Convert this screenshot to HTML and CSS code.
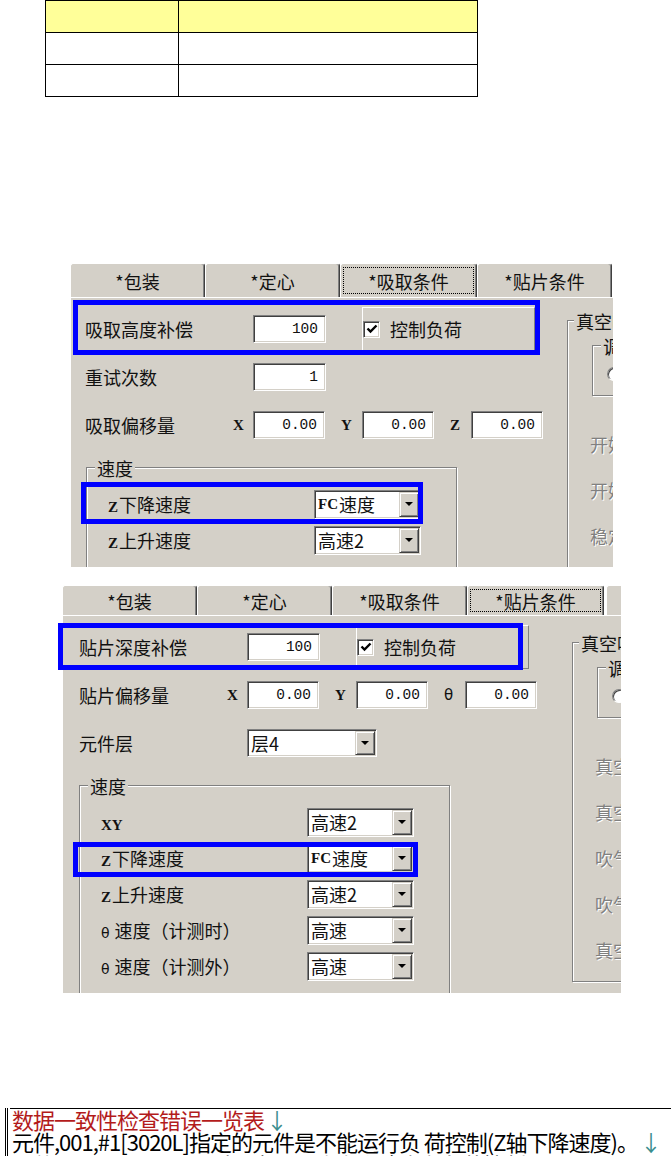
FILE: index.html
```html
<!DOCTYPE html>
<html lang="zh-CN">
<head>
    <meta charset="UTF-8">
    <meta name="viewport" content="width=device-width, initial-scale=1.0">
    <title>吸取条件 / 贴片条件 负荷控制</title>
    <link rel="stylesheet" href="styles.css">
</head>
<body>
    <table class="spec">
        <tr class="spec-head"><td class="c1"></td><td class="c2"></td></tr>
        <tr><td class="c1"></td><td class="c2"></td></tr>
        <tr><td class="c1"></td><td class="c2"></td></tr>
    </table>

    <!-- 吸取条件 -->
    <div class="dlg dlg-pick">
        <div class="tabs">
            <div class="tab">*包装</div>
            <div class="tab">*定心</div>
            <div class="tab active"><span class="focus">*吸取条件</span></div>
            <div class="tab">*贴片条件</div>
        </div>
        <div class="panel">
            <div class="main">
                <div class="row">
                    <span class="lbl">吸取高度补偿</span>
                    <span class="edit">100</span>
                    <span class="chk-wrap">
                        <span class="chk"><svg width="12" height="12" viewBox="0 0 12 12"><polyline points="1.5,5.5 4.5,8.5 10.5,2.5" fill="none" stroke="#000" stroke-width="2.4"/></svg></span>
                        <span>控制负荷</span>
                    </span>
                </div>
                <div class="row">
                    <span class="lbl">重试次数</span>
                    <span class="edit">1</span>
                </div>
                <div class="row">
                    <span class="lbl lbl-s">吸取偏移量</span>
                    <span class="ax ax-first">X</span>
                    <span class="edit edit-sm">0.00</span>
                    <span class="ax">Y</span>
                    <span class="edit edit-sm">0.00</span>
                    <span class="ax">Z</span>
                    <span class="edit edit-sm">0.00</span>
                </div>
                <div class="grp speed">
                    <span class="grp-title">速度</span>
                    <div class="srows">
                        <div class="srow">
                            <span class="slbl"><span class="mono">Z</span>下降速度</span>
                            <span class="combo"><span class="combo-text"><span class="mono">FC</span>速度</span><span class="drop"></span></span>
                        </div>
                        <div class="srow">
                            <span class="slbl"><span class="mono">Z</span>上升速度</span>
                            <span class="combo"><span class="combo-text">高速2</span><span class="drop"></span></span>
                        </div>
                    </div>
                </div>
            </div>
            <div class="grp side">
                <span class="grp-title">真空吸着检查</span>
                <div class="grp inner">
                    <span class="grp-title">调整方法</span>
                    <span class="radio"></span>
                </div>
                <div class="dims">
                    <div class="dim">开始检测位置</div>
                    <div class="dim">开始检测时间</div>
                    <div class="dim">稳定时间</div>
                </div>
            </div>
        </div>
        <div class="mark mark-1"></div>
        <div class="mark mark-2"></div>
    </div>

    <!-- 贴片条件 -->
    <div class="dlg dlg-place">
        <div class="tabs">
            <div class="tab">*包装</div>
            <div class="tab">*定心</div>
            <div class="tab">*吸取条件</div>
            <div class="tab active"><span class="focus">*贴片条件</span></div>
            <div class="tab tab-cut"></div>
        </div>
        <div class="panel">
            <div class="main">
                <div class="row">
                    <span class="lbl">贴片深度补偿</span>
                    <span class="edit">100</span>
                    <span class="chk-wrap">
                        <span class="chk"><svg width="12" height="12" viewBox="0 0 12 12"><polyline points="1.5,5.5 4.5,8.5 10.5,2.5" fill="none" stroke="#000" stroke-width="2.4"/></svg></span>
                        <span>控制负荷</span>
                    </span>
                </div>
                <div class="row">
                    <span class="lbl lbl-s">贴片偏移量</span>
                    <span class="ax ax-first">X</span>
                    <span class="edit edit-sm">0.00</span>
                    <span class="ax">Y</span>
                    <span class="edit edit-sm">0.00</span>
                    <span class="ax ax-theta">θ</span>
                    <span class="edit edit-sm">0.00</span>
                </div>
                <div class="row">
                    <span class="lbl">元件层</span>
                    <span class="combo combo-wide"><span class="combo-text">层4</span><span class="drop"></span></span>
                </div>
                <div class="grp speed">
                    <span class="grp-title">速度</span>
                    <div class="srows">
                        <div class="srow">
                            <span class="slbl"><span class="mono">XY</span></span>
                            <span class="combo"><span class="combo-text">高速2</span><span class="drop"></span></span>
                        </div>
                        <div class="srow">
                            <span class="slbl"><span class="mono">Z</span>下降速度</span>
                            <span class="combo"><span class="combo-text"><span class="mono">FC</span>速度</span><span class="drop"></span></span>
                        </div>
                        <div class="srow">
                            <span class="slbl"><span class="mono">Z</span>上升速度</span>
                            <span class="combo"><span class="combo-text">高速2</span><span class="drop"></span></span>
                        </div>
                        <div class="srow">
                            <span class="slbl"><span class="theta">θ</span>速度（计测时）</span>
                            <span class="combo"><span class="combo-text">高速</span><span class="drop"></span></span>
                        </div>
                        <div class="srow">
                            <span class="slbl"><span class="theta">θ</span>速度（计测外）</span>
                            <span class="combo"><span class="combo-text">高速</span><span class="drop"></span></span>
                        </div>
                    </div>
                </div>
            </div>
            <div class="grp side">
                <span class="grp-title">真空吸着检查</span>
                <div class="grp inner">
                    <span class="grp-title">调整方法</span>
                    <span class="radio"></span>
                </div>
                <div class="dims">
                    <div class="dim">真空吸着时间</div>
                    <div class="dim">真空破坏时间</div>
                    <div class="dim">吹气时间</div>
                    <div class="dim">吹气压力</div>
                    <div class="dim">真空检查</div>
                </div>
            </div>
        </div>
        <div class="mark mark-3"></div>
        <div class="mark mark-4"></div>
    </div>

    <div class="log">
        <div class="log-rule"></div>
        <div class="log-body">
            <div class="log-title">数据一致性检查错误一览表<span class="para">↓</span></div>
            <div class="log-line">元件,001,#1[3020L]指定的元件是不能运行负 荷控制(Z轴下降速度)。<span class="para">↓</span></div>
            <div class="log-line">元件,001,#1[3020L]同时设定了吸嘴上升速度和负荷控制。<span class="para">↓</span></div>
        </div>
    </div>
</body>
</html>
```

FILE: styles.css
```css
body {
    margin: 0;
    background: #fff;
    font-family: "Noto Sans CJK SC", sans-serif;
    color: #000;
}

/* empty spec table at the top */
.spec {
    margin-left: 45px;
    border-collapse: collapse;
}

.spec td {
    border: 1px solid #000;
    padding: 0;
    height: 31px;
}

.spec .c1 { width: 132px; }
.spec .c2 { width: 298px; }

.spec-head td {
    background: #ffff99; /* yellow header */
}

/* dialog captures */
.dlg {
    position: relative;
    width: 543px;
    margin: 166px 0 0 70px;
    font-size: 18px;
    line-height: 22px;
    color: #111;
}

.dlg-place {
    width: 559px;
    margin: 18px 0 0 62px;
}

.tabs {
    display: flex;
    height: 34px;
    overflow: hidden;
}

.dlg-place .tabs {
    height: 30px;
}

.tab {
    flex: none;
    width: 135px;
    box-sizing: border-box;
    display: flex;
    align-items: center;
    justify-content: center;
    background: #d4d0c8;
    border-top: 1px solid #fff;
    border-left: 1px solid #fff;
    border-right: 1px solid #404040;
    border-radius: 3px 3px 0 0;
    box-shadow: inset -1px 0 #808080;
}

.tab.active {
    width: 137px;
}

.tab-cut {
    width: 80px;
    margin-left: 2px;
}

.focus {
    flex: 1;
    align-self: stretch;
    margin: 3px 2px 3px 2px;
    border: 1px dotted #000;
    display: flex;
    align-items: center;
    justify-content: center;
}

.panel {
    display: flex;
    height: 270px;
    overflow: hidden;
    background: #d4d0c8;
    box-shadow: inset 1px 1px #fff;
}

.dlg-place .panel {
    height: 378px;
}

.main {
    flex: none;
    width: 497px;
    box-sizing: border-box;
    padding: 8px 0 0 15px;
}

.dlg-place .main {
    width: 510px;
    padding-left: 17px;
}

.row {
    display: flex;
    align-items: center;
    height: 48px;
}

.lbl {
    flex: none;
    width: 168px;
}

.lbl-s {
    width: 148px;
}

/* sunken edit box */
.edit {
    flex: none;
    box-sizing: border-box;
    width: 73px;
    height: 28px;
    padding: 0 7px;
    background: #fff;
    border: 1px solid;
    border-color: #808080 #fff #fff #808080;
    box-shadow: inset 1px 1px #404040, inset -1px -1px #d4d0c8;
    font: 14.5px/26px "Liberation Mono", monospace;
    text-align: right;
}

.edit-sm {
    width: 72px;
}

.ax {
    flex: none;
    width: 21px;
    margin-left: 16px;
    font: bold 15px "Liberation Serif", serif;
}

.ax-first {
    width: 20px;
    margin-left: 0;
}

.ax-theta {
    font: 15px "DejaVu Sans", sans-serif;
}

.mono {
    font: bold 15px "Liberation Serif", serif;
    margin-right: 1px;
}

.theta {
    font: 14px "DejaVu Sans", sans-serif;
    margin-right: 5px;
}

.chk-wrap {
    flex: none;
    box-sizing: border-box;
    width: 173px;
    height: 44px;
    margin-left: 36px;
    display: flex;
    align-items: center;
    gap: 10px;
    border: 1px solid;
    border-color: #fff #808080 #808080 #fff;
}

.chk {
    flex: none;
    box-sizing: border-box;
    width: 17px;
    height: 17px;
    display: flex;
    align-items: center;
    justify-content: center;
    background: #fff;
    border: 1px solid;
    border-color: #808080 #fff #fff #808080;
    box-shadow: inset 1px 1px #404040, inset -1px -1px #d4d0c8;
}

/* combo box */
.combo {
    flex: none;
    box-sizing: border-box;
    width: 107px;
    height: 29px;
    display: flex;
    align-items: stretch;
    padding-left: 3px;
    background: #fff;
    border: 1px solid;
    border-color: #808080 #fff #fff #808080;
    box-shadow: inset 1px 1px #404040, inset -1px -1px #d4d0c8;
}

.combo-wide {
    width: 130px;
    height: 28px;
}

.combo-text {
    flex: 1;
    display: flex;
    align-items: center;
    white-space: nowrap;
}

.drop {
    flex: none;
    box-sizing: border-box;
    width: 20px;
    margin: 1px 1px 1px 0;
    display: flex;
    align-items: center;
    justify-content: center;
    background: #d4d0c8;
    border: 1px solid;
    border-color: #d4d0c8 #404040 #404040 #d4d0c8;
    box-shadow: inset 1px 1px #fff, inset -1px -1px #808080;
}

.drop::after {
    content: "";
    border-left: 4px solid transparent;
    border-right: 4px solid transparent;
    border-top: 4px solid #000;
}

/* etched group box */
.grp {
    box-sizing: border-box;
    border: 1px solid #808080;
    box-shadow: inset 1px 1px #fff, 1px 1px #fff;
}

.grp-title {
    display: block;
    width: fit-content;
    margin: -11px 0 0 8px;
    padding: 0 2px;
    background: #d4d0c8;
    white-space: nowrap;
}

.speed {
    width: 371px;
    height: 240px;
    margin: 18px 0 0 1px;
}

.dlg-place .speed {
    margin-left: 0;
}

.srows {
    padding-top: 7px;
}

.srow {
    display: flex;
    align-items: center;
    height: 36px;
    padding-left: 21px;
}

.slbl {
    flex: none;
    width: 206px;
    white-space: nowrap;
}

.side {
    flex: none;
    width: 200px;
    height: 340px;
    margin-top: 23px;
}

.dlg-place .side {
    margin-top: 27px;
}

.side > .grp-title {
    margin-left: 6px;
}

.inner {
    width: 130px;
    height: 51px;
    margin: 13px 0 0 24px;
}

.radio {
    display: block;
    box-sizing: border-box;
    width: 14px;
    height: 14px;
    margin: 10px 0 0 14px;
    border-radius: 50%;
    background: #fff;
    border: 1px solid;
    border-color: #808080 #fff #fff #808080;
    box-shadow: inset 1px 1px #404040;
}

.dims {
    margin-top: 25px;
}

.dim {
    height: 46px;
    line-height: 46px;
    padding-left: 22px;
    color: #808080; /* disabled text */
    text-shadow: 1px 1px #fff;
    white-space: nowrap;
}

/* blue annotation frames */
.mark {
    position: absolute;
    box-sizing: border-box;
    border: 5px solid #0000ff;
}

.mark-1 { left: 3px; top: 37px; width: 467px; height: 55px; }
.mark-2 { left: 11px; top: 219px; width: 342px; height: 42px; }
.mark-3 { left: -4px; top: 38px; width: 465px; height: 47px; }
.mark-4 { left: 11px; top: 257px; width: 345px; height: 35px; }

/* error list */
.log {
    margin-top: 115px;
}

.log-rule {
    margin-left: 10px;
    border-top: 1px solid #000;
}

.log-body {
    margin: -1px 0 0 5px;
    padding-left: 4px;
    border-left: 3px double #000;
    font-size: 22px;
    line-height: 22px;
    letter-spacing: -1px;
    white-space: nowrap;
}

.log-title {
    color: #b31b1b;
}

.log-line {
    line-height: 23px;
}

.para {
    color: #3b8e8e;
    margin-left: 2px;
}
```
